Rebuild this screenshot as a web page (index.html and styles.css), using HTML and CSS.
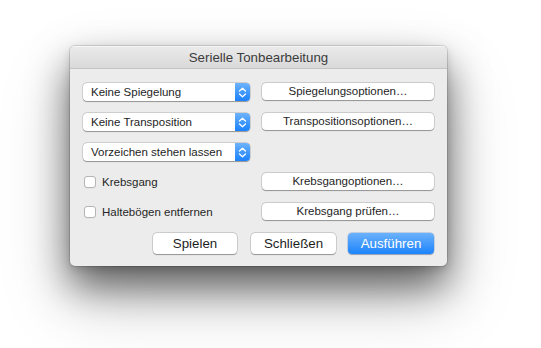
FILE: index.html
```html
<!DOCTYPE html>
<html lang="de">
<head>
<meta charset="utf-8">
<title>Serielle Tonbearbeitung</title>
<link rel="stylesheet" href="styles.css">
</head>
<body>
<div class="window">
  <div class="titlebar">Serielle Tonbearbeitung</div>
  <div class="content">
    <div class="grid">
      <div class="popup"><span class="popup-label">Keine Spiegelung</span><span class="popup-arrows"><svg width="9" height="11" viewBox="0 0 9 11"><path d="M1.5 4 L4.5 1.2 L7.5 4 M1.5 7 L4.5 9.8 L7.5 7" fill="none" stroke="#fff" stroke-width="1.3" stroke-linecap="round" stroke-linejoin="round"/></svg></span></div>
      <button class="small-btn">Spiegelungsoptionen…</button>

      <div class="popup"><span class="popup-label">Keine Transposition</span><span class="popup-arrows"><svg width="9" height="11" viewBox="0 0 9 11"><path d="M1.5 4 L4.5 1.2 L7.5 4 M1.5 7 L4.5 9.8 L7.5 7" fill="none" stroke="#fff" stroke-width="1.3" stroke-linecap="round" stroke-linejoin="round"/></svg></span></div>
      <button class="small-btn">Transpositionsoptionen…</button>

      <div class="popup"><span class="popup-label">Vorzeichen stehen lassen</span><span class="popup-arrows"><svg width="9" height="11" viewBox="0 0 9 11"><path d="M1.5 4 L4.5 1.2 L7.5 4 M1.5 7 L4.5 9.8 L7.5 7" fill="none" stroke="#fff" stroke-width="1.3" stroke-linecap="round" stroke-linejoin="round"/></svg></span></div>
      <div class="empty"></div>

      <label class="check"><span class="box"></span>Krebsgang</label>
      <button class="small-btn">Krebsgangoptionen…</button>

      <label class="check"><span class="box"></span>Haltebögen entfernen</label>
      <button class="small-btn">Krebsgang prüfen…</button>
    </div>
    <div class="actions">
      <button class="btn spielen">Spielen</button>
      <button class="btn">Schließen</button>
      <button class="btn primary">Ausführen</button>
    </div>
  </div>
</div>
</body>
</html>
```
FILE: styles.css
```css
html, body {
  margin: 0;
  padding: 0;
  background: #ffffff;
}
body {
  width: 541px;
  height: 348px;
  overflow: hidden;
  font-family: "Liberation Sans", Arial, sans-serif;
  color: #222;
}
.window {
  margin: 46px 0 0 70px;
  width: 377px;
  height: 220px;
  box-sizing: border-box;
  background: #ececec;
  border-radius: 5px;
  box-shadow: 0 0 0 1px rgba(0,0,0,0.12), 0 20px 38px rgba(0,0,0,0.55), 0 32px 70px rgba(0,0,0,0.22), 0 3px 8px rgba(0,0,0,0.15);
  overflow: hidden;
}
.titlebar {
  height: 22px;
  line-height: 23px;
  text-align: center;
  font-size: 13.3px;
  color: #3c3c3c;
  background: linear-gradient(#ebebeb, #d9d9d9);
  border-bottom: 1px solid #c4c4c4;
  box-shadow: inset 0 1px 0 #f6f6f6;
}
.content {
  padding: 14px 13px 12px 13px;
}
.grid {
  display: grid;
  grid-template-columns: 167px 172px;
  grid-auto-rows: 18px;
  column-gap: 12px;
  row-gap: 12px;
}
.popup {
  display: flex;
  align-items: stretch;
  height: 18px;
  box-sizing: border-box;
  background: #fff;
  border-radius: 4px;
  box-shadow: 0 0 0 0.5px rgba(0,0,0,0.2), 0 0.5px 1px rgba(0,0,0,0.3);
  overflow: hidden;
}
.popup-label {
  flex: 1;
  font-size: 11.5px;
  line-height: 18px;
  padding-left: 8px;
  color: #1e1e1e;
  white-space: nowrap;
}
.popup-arrows {
  width: 15px;
  display: flex;
  align-items: center;
  justify-content: center;
  background: linear-gradient(#6db3fb, #1b81fb);
}
.small-btn {
  height: 17px;
  padding: 0;
  margin: 0;
  border: none;
  background: #fff;
  border-radius: 4px;
  box-shadow: 0 0 0 0.5px rgba(0,0,0,0.22), 0 0.5px 1px rgba(0,0,0,0.3);
  font-family: "Liberation Sans", Arial, sans-serif;
  font-size: 11.5px;
  line-height: 17px;
  color: #1e1e1e;
  text-align: center;
}
.check {
  display: flex;
  align-items: center;
  font-size: 11.5px;
  color: #262626;
  padding-left: 1px;
  height: 18px;
}
.box {
  width: 12px;
  height: 12px;
  box-sizing: border-box;
  background: #fff;
  border: 1px solid #b5b5b5;
  border-radius: 3px;
  margin-right: 6px;
  box-shadow: 0 0.5px 0 rgba(0,0,0,0.05);
}
.actions {
  display: flex;
  justify-content: flex-end;
  gap: 12px;
  margin-top: 12px;
}
.btn {
  width: 85px;
  height: 21px;
  padding: 0;
  margin: 0;
  border: none;
  background: #fff;
  border-radius: 4px;
  box-shadow: 0 0 0 0.5px rgba(0,0,0,0.22), 0 0.5px 1px rgba(0,0,0,0.3);
  font-family: "Liberation Sans", Arial, sans-serif;
  font-size: 13.3px;
  line-height: 21px;
  color: #1e1e1e;
}
.spielen {
  width: 84px;
  margin-right: 2px;
}
.primary {
  width: 86px;
  color: #fff;
  background: linear-gradient(#6cb2fb, #1c83fb);
  box-shadow: 0 0 0 0.5px rgba(20,90,200,0.35), 0 0.5px 1px rgba(0,0,0,0.25);
}
```
